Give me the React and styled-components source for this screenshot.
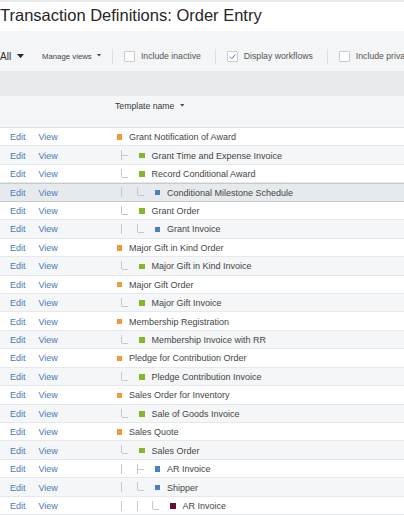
import React from 'react'
import styled, { createGlobalStyle } from 'styled-components'

const GlobalStyle = createGlobalStyle`
  html, body {
    margin: 0;
    padding: 0;
    background: #ffffff;
    overflow: hidden;
  }
  body {
    font-family: "Liberation Sans", Arial, sans-serif;
    color: #454545;
  }
`

const ROW_H = 18.45

const colors = {
  order: '#f39a38',
  invoice: '#86b62b',
  sub: '#4a80c0',
  leaf: '#5f1236',
}

const rows = [
  { name: 'Grant Notification of Award', kind: 'order', guides: [] },
  { name: 'Grant Time and Expense Invoice', kind: 'invoice', guides: ['tee'] },
  { name: 'Record Conditional Award', kind: 'invoice', guides: ['elbow'] },
  { name: 'Conditional Milestone Schedule', kind: 'sub', guides: ['pipe', 'elbow'], hover: true },
  { name: 'Grant Order', kind: 'invoice', guides: ['elbow'] },
  { name: 'Grant Invoice', kind: 'sub', guides: ['pipe', 'elbow'] },
  { name: 'Major Gift in Kind Order', kind: 'order', guides: [] },
  { name: 'Major Gift in Kind Invoice', kind: 'invoice', guides: ['elbow'] },
  { name: 'Major Gift Order', kind: 'order', guides: [] },
  { name: 'Major Gift Invoice', kind: 'invoice', guides: ['elbow'] },
  { name: 'Membership Registration', kind: 'order', guides: [] },
  { name: 'Membership Invoice with RR', kind: 'invoice', guides: ['elbow'] },
  { name: 'Pledge for Contribution Order', kind: 'order', guides: [] },
  { name: 'Pledge Contribution Invoice', kind: 'invoice', guides: ['elbow'] },
  { name: 'Sales Order for Inventory', kind: 'order', guides: [] },
  { name: 'Sale of Goods Invoice', kind: 'invoice', guides: ['elbow'] },
  { name: 'Sales Quote', kind: 'order', guides: [] },
  { name: 'Sales Order', kind: 'invoice', guides: ['elbow'] },
  { name: 'AR Invoice', kind: 'sub', guides: ['pipe', 'tee'] },
  { name: 'Shipper', kind: 'sub', guides: ['pipe', 'elbow'] },
  { name: 'AR Invoice', kind: 'leaf', guides: ['pipe', 'pipe', 'elbow'] },
]

const Caret = ({ size = 7, color = '#333' }) => (
  <CaretSvg width={size} height={size * 0.6} viewBox="0 0 10 6">
    <path d="M0 0 L10 0 L5 6 Z" fill={color} />
  </CaretSvg>
)

const Guide = ({ type }) => (
  <GuideSvg width="15.5" height={ROW_H} viewBox={`0 0 15.5 ${ROW_H}`} shapeRendering="crispEdges">
    {type === 'pipe' && <line x1="7.5" y1="4.5" x2="7.5" y2="14.5" stroke="#c4c8cb" />}
    {type === 'tee' && (
      <>
        <line x1="7.5" y1="4" x2="7.5" y2="14.5" stroke="#c4c8cb" />
        <line x1="7.5" y1="10" x2="14" y2="10" stroke="#c4c8cb" />
      </>
    )}
    {type === 'elbow' && (
      <>
        <line x1="7.5" y1="4" x2="7.5" y2="12.5" stroke="#c4c8cb" />
        <line x1="7.5" y1="12.5" x2="14" y2="12.5" stroke="#c4c8cb" />
      </>
    )}
  </GuideSvg>
)

const Checkbox = ({ checked }) => (
  <Box>
    {checked && (
      <svg width="9" height="9" viewBox="0 0 10 10">
        <path d="M2 5.2 L4.2 7.4 L8.2 2.6" fill="none" stroke="#3f7cc4" strokeWidth="1.1" />
      </svg>
    )}
  </Box>
)

export default function App() {
  return (
    <Page>
      <GlobalStyle />
      <TitleBar>
        <Title>Transaction Definitions: Order Entry</Title>
      </TitleBar>
      <Toolbar>
        <AllMenu>
          All <Caret size={7} color="#2a2a2a" />
        </AllMenu>
        <ManageViews>
          Manage views <Caret size={4} color="#444" />
        </ManageViews>
        <Separator />
        <Filter>
          <Checkbox />
          <FilterLabel>Include inactive</FilterLabel>
        </Filter>
        <Separator />
        <Filter>
          <Checkbox checked />
          <FilterLabel>Display workflows</FilterLabel>
        </Filter>
        <Separator />
        <Filter>
          <Checkbox />
          <FilterLabel>Include private</FilterLabel>
        </Filter>
      </Toolbar>
      <Band />
      <HeaderRow>
        <HeaderLabel>
          Template name <Caret size={4.5} color="#555" />
        </HeaderLabel>
      </HeaderRow>
      <Table>
        {rows.map((r, i) => (
          <Row key={i} $alt={i % 2 === 1} $hover={r.hover}>
            <Actions>
              <ActionLink>Edit</ActionLink>
              <ActionLink>View</ActionLink>
            </Actions>
            <NameCell>
              {r.guides.map((g, j) => (
                <Guide key={j} type={g} />
              ))}
              <Marker $color={colors[r.kind]} $nested={r.guides.length > 0} />
              <Name>{r.name}</Name>
            </NameCell>
          </Row>
        ))}
      </Table>
    </Page>
  )
}

const Page = styled.div`
  width: 404px;
  height: 515px;
  overflow: hidden;
  background: #ffffff;
`

const TitleBar = styled.header`
  border-top: 2px solid #e8eaeb;
  height: 31px;
  padding-top: 4px;
  box-sizing: border-box;
  background: #ffffff;
`

const Title = styled.h1`
  margin: 0;
  font-size: 16.5px;
  font-weight: normal;
  line-height: 19px;
  color: #262626;
  white-space: nowrap;
`

const Toolbar = styled.div`
  display: flex;
  align-items: center;
  height: 40px;
  box-sizing: border-box;
  padding-top: 10px;
  background: #f4f5f6;
  white-space: nowrap;
`

const CaretSvg = styled.svg`
  display: inline-block;
  vertical-align: middle;
  margin-left: 3px;
  margin-top: -2px;
`

const AllMenu = styled.div`
  font-size: 10px;
  color: #2a2a2a;
  margin-right: 18px;
`

const ManageViews = styled.div`
  font-size: 7.8px;
  color: #444;
  margin-right: 11px;
`

const Separator = styled.span`
  width: 1px;
  height: 15px;
  background: #dcdfe1;
  flex-shrink: 0;
`

const Filter = styled.label`
  display: flex;
  align-items: center;
  margin-left: 11px;
  margin-right: 14px;
`

const Box = styled.span`
  display: flex;
  align-items: center;
  justify-content: center;
  width: 11px;
  height: 11px;
  box-sizing: border-box;
  border: 1px solid #c9cccf;
  border-radius: 1px;
  background: #ffffff;
  margin-right: 6px;
`

const FilterLabel = styled.span`
  font-size: 8.7px;
  color: #555;
`

const Band = styled.div`
  height: 25px;
  background: #e8ebed;
`

const HeaderRow = styled.div`
  height: 32px;
  box-sizing: border-box;
  background: #f5f6f7;
  border-bottom: 1px solid #e0e3e5;
  padding: 5px 0 0 115px;
`

const HeaderLabel = styled.div`
  font-size: 8.7px;
  color: #3a3a3a;
  line-height: 11px;
`

const Table = styled.div`
  display: flex;
  flex-direction: column;
`

const Row = styled.div`
  display: flex;
  align-items: center;
  height: ${ROW_H}px;
  flex-shrink: 0;
  box-sizing: border-box;
  background: ${(p) => (p.$hover ? '#e7eaed' : p.$alt ? '#f4f6f7' : '#ffffff')};
  box-shadow: ${(p) =>
    p.$hover ? 'inset 0 1px 0 #c6cace, inset 0 -1px 0 #c6cace' : 'inset 0 -1px 0 #e6e9eb'};
`

const Actions = styled.div`
  display: flex;
  width: 114px;
  padding-left: 10px;
  box-sizing: border-box;
  flex-shrink: 0;
`

const ActionLink = styled.a`
  font-size: 9px;
  color: #4a7ab5;
  margin-right: 13px;
  cursor: pointer;
`

const NameCell = styled.div`
  display: flex;
  align-items: center;
  height: 100%;
`

const GuideSvg = styled.svg`
  display: block;
  flex-shrink: 0;
`

const Marker = styled.span`
  width: 5.5px;
  height: 5.5px;
  background: ${(p) => p.$color};
  margin-left: ${(p) => (p.$nested ? '9.5px' : '2.5px')};
  margin-right: 7px;
  flex-shrink: 0;
`

const Name = styled.span`
  font-size: 9px;
  color: #454545;
  white-space: nowrap;
`
